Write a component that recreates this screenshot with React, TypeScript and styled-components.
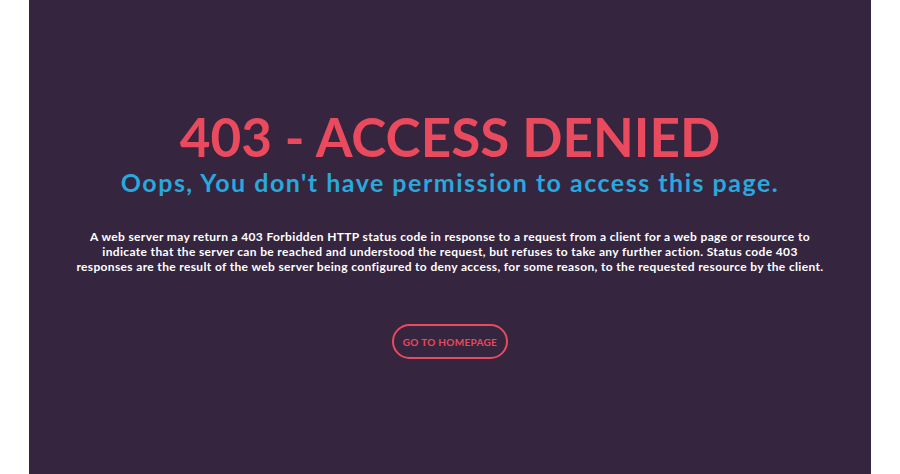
import styled, { createGlobalStyle } from "styled-components";

// Page reset
const GlobalStyle = createGlobalStyle`
  html, body {
    margin: 0;
    padding: 0;
    background: #ffffff;
  }
  body {
    font-family: Lato, "Open Sans", sans-serif;
  }
`;

// Error page
function App() {
  return (
    <>
      <GlobalStyle />
      <Page>
        <Title>403 - ACCESS DENIED</Title>
        <Subtitle>Oops, You don't have permission to access this page.</Subtitle>
        <Description>
          A web server may return a 403 Forbidden HTTP status code in response to a request from a client for a web page or resource to
          <br />
          indicate that the server can be reached and understood the request, but refuses to take any further action. Status code 403
          <br />
          responses are the result of the web server being configured to deny access, for some reason, to the requested resource by the client.
        </Description>
        <HomeButton href="#">GO TO HOMEPAGE</HomeButton>
      </Page>
    </>
  );
}
export default App;

// Dark panel
const Page = styled.div`
  width: 842px;
  height: 474px;
  margin: 0 auto;
  background: #35253f;
  display: flex;
  flex-direction: column;
  align-items: center;
  padding-top: 107px;
  box-sizing: border-box;
`;

// Big red heading
const Title = styled.h1`
  margin: 0;
  font-size: 53px;
  line-height: 60px;
  font-weight: 700;
  color: #e94a5e;
  letter-spacing: 0;
`;

// Blue subheading
const Subtitle = styled.h2`
  margin: 0;
  font-size: 25px;
  line-height: 30px;
  font-weight: 700;
  color: #28a8dd;
  letter-spacing: 1.5px;
`;

// Paragraph text
const Description = styled.p`
  margin: 32px 0 0;
  width: 842px;
  text-align: center;
  font-size: 12px;
  line-height: 15px;
  font-weight: 700;
  color: #ffffff;
  letter-spacing: 0.35px;
  white-space: nowrap;
`;

// Outlined button
const HomeButton = styled.a`
  margin-top: 50px;
  width: 116px;
  height: 35px;
  box-sizing: border-box;
  border: 2px solid #e94a5e;
  border-radius: 18px;
  display: flex;
  align-items: center;
  justify-content: center;
  color: #e94a5e;
  font-size: 10px;
  font-weight: 700;
  letter-spacing: 0.3px;
  text-decoration: none;
`;
